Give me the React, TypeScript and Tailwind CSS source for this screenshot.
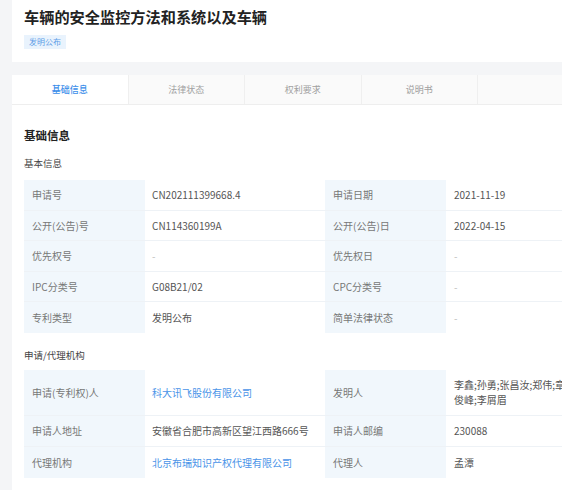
const font = { fontFamily: '"Noto Sans CJK SC", "Noto Sans", sans-serif' };

type Cell = { text: React.ReactNode; kind?: "link" | "empty" };
type Row = { l1: string; v1: Cell; l2: string; v2: Cell; h: string };

const basicRows: Row[] = [
  { l1: "申请号", v1: { text: "CN202111399668.4" }, l2: "申请日期", v2: { text: "2021-11-19" }, h: "h-[30.6px]" },
  { l1: "公开(公告)号", v1: { text: "CN114360199A" }, l2: "公开(公告)日", v2: { text: "2022-04-15" }, h: "h-[30.6px]" },
  { l1: "优先权号", v1: { text: "-", kind: "empty" }, l2: "优先权日", v2: { text: "-", kind: "empty" }, h: "h-[30.6px]" },
  { l1: "IPC分类号", v1: { text: "G08B21/02" }, l2: "CPC分类号", v2: { text: "-", kind: "empty" }, h: "h-[30.6px]" },
  { l1: "专利类型", v1: { text: "发明公布" }, l2: "简单法律状态", v2: { text: "-", kind: "empty" }, h: "h-[30.6px]" },
];

const agentRows: Row[] = [
  {
    l1: "申请(专利权)人",
    v1: { text: "科大讯飞股份有限公司", kind: "link" },
    l2: "发明人",
    v2: {
      text: (
        <>
          李鑫;孙勇;张昌汝;郑伟;章
          <br />
          俊峰;李屑眉
        </>
      ),
    },
    h: "h-[46px]",
  },
  { l1: "申请人地址", v1: { text: "安徽省合肥市高新区望江西路666号" }, l2: "申请人邮编", v2: { text: "230088" }, h: "h-[31px]" },
  { l1: "代理机构", v1: { text: "北京布瑞知识产权代理有限公司", kind: "link" }, l2: "代理人", v2: { text: "孟潭" }, h: "h-[31px]" },
];

const tabs = ["基础信息", "法律状态", "权利要求", "说明书", ""];

function Value({ cell }: { cell: Cell }) {
  const color =
    cell.kind === "link" ? "text-[#4a94e8]" : cell.kind === "empty" ? "text-[#bdbdbd]" : "text-[#555]";
  return <span className={`${color} whitespace-nowrap leading-[15px]`}>{cell.text}</span>;
}

function InfoTable({ rows }: { rows: Row[] }) {
  return (
    <div className="flex flex-col w-[600px] text-[10px]">
      {rows.map((r, i) => (
        <div key={i} className={`flex ${r.h} border-b border-[#eef2f6] last:border-b-0`}>
          <div className="w-[121px] bg-[#f1f7fc] flex items-center pl-[8px] text-[#777]">{r.l1}</div>
          <div className="w-[180px] flex items-center pl-[7px]">
            <Value cell={r.v1} />
          </div>
          <div className="w-[121px] bg-[#f1f7fc] flex items-center pl-[8px] text-[#777]">{r.l2}</div>
          <div className="flex-1 flex items-center pl-[8px]">
            <Value cell={r.v2} />
          </div>
        </div>
      ))}
    </div>
  );
}

export default function App() {
  return (
    <div className="w-[562px] h-[490px] overflow-hidden bg-[#f4f5f7] pl-[12px]" style={font}>
      <div className="w-[640px]">
        <div className="bg-white h-[62px] pl-[12px] pt-[6px]">
          <h1 className="text-[15.2px] font-bold text-[#222] leading-[20px]">车辆的安全监控方法和系统以及车辆</h1>
          <span className="mt-[8px] inline-flex items-center h-[14px] px-[5px] bg-[#e9f3fd] text-[#5b9be6] text-[8px]">
            发明公布
          </span>
        </div>

        <div className="mt-[13px] bg-white pb-[20px]">
          <div className="flex h-[30px] border-b border-[#eeeeee]">
            {tabs.map((t, i) => (
              <div
                key={i}
                className={`w-[116.5px] flex items-center justify-center text-[9px] border-r border-[#efefef] ${
                  i === 0 ? "bg-white text-[#3b8eea] font-medium" : "bg-[#fafafa] text-[#a0a0a0]"
                }`}
              >
                {t}
              </div>
            ))}
          </div>

          <div className="pl-[12px]">
            <h2 className="mt-[22px] text-[11.5px] font-bold text-[#222] leading-[16px]">基础信息</h2>
            <div className="mt-[13px] text-[9.5px] text-[#444] leading-[14px]">基本信息</div>
            <div className="mt-[10px]">
              <InfoTable rows={basicRows} />
            </div>
            <div className="mt-[15px] text-[9.5px] text-[#444] leading-[14px]">申请/代理机构</div>
            <div className="mt-[8px]">
              <InfoTable rows={agentRows} />
            </div>
          </div>
        </div>
      </div>
    </div>
  );
}
